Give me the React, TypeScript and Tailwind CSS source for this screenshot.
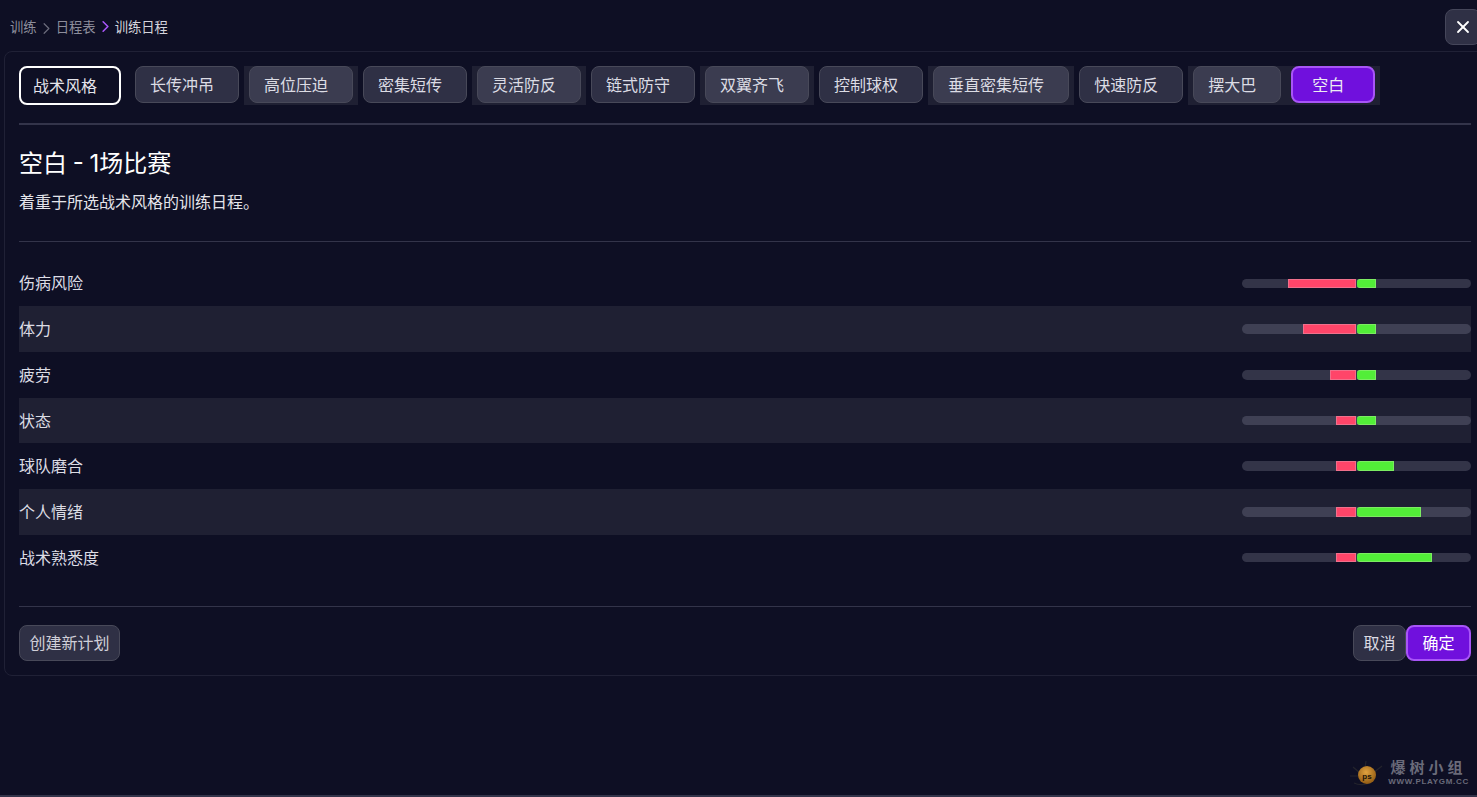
import React from 'react';
import { X, ChevronRight } from 'lucide-react';

const styles = [
  { label: '长传冲吊' },
  { label: '高位压迫', strip: true },
  { label: '密集短传' },
  { label: '灵活防反', strip: true },
  { label: '链式防守' },
  { label: '双翼齐飞', strip: true },
  { label: '控制球权' },
  { label: '垂直密集短传', strip: true },
  { label: '快速防反' },
  { label: '摆大巴', strip: true },
  { label: '空白', strip: true, active: true },
];

const stats = [
  { label: '伤病风险', down: 68, up: 19 },
  { label: '体力', down: 53, up: 19 },
  { label: '疲劳', down: 26, up: 19 },
  { label: '状态', down: 20, up: 19 },
  { label: '球队磨合', down: 20, up: 37 },
  { label: '个人情绪', down: 20, up: 64 },
  { label: '战术熟悉度', down: 20, up: 75 },
];

function StatBar({ down, up, shaded }: { down: number; up: number; shaded: boolean }) {
  return (
    <div className={`flex h-[9.5px] w-[229px] overflow-hidden rounded-full ${shaded ? 'bg-[#3f4054]' : 'bg-[#333448]'}`}>
      <div className="flex w-[114px] justify-end">
        <div className="border border-[#f0708c] bg-[#ff4569]" style={{ width: down }} />
      </div>
      <div className="w-[1px]" />
      <div className="rounded-l-[3px] border border-[#7cec62] border-l-0 bg-[#52ee38]" style={{ width: up }} />
    </div>
  );
}

export default function App() {
  return (
    <div className="relative h-[797px] w-[1477px] overflow-hidden border-b-2 border-[#33344a] bg-[#0e0f24] text-[#e4e4ea] [font-family:'Inter','Noto_Sans_CJK_SC',sans-serif]">
      {/* Breadcrumb */}
      <div className="flex h-[51px] items-start justify-between pl-[10px] pt-[9px]">
        <div className="flex h-[38px] items-center text-[13.33px] text-[#8d8e9c]">
          <span>训练</span>
          <ChevronRight className="h-[19px] w-[19px] text-[#6b6c7c]" strokeWidth={1.5} />
          <span>日程表</span>
          <ChevronRight className="-mt-[3px] h-[19px] w-[19px] text-[#a855f7]" strokeWidth={2} />
          <span className="text-[#d5d5dd]">训练日程</span>
        </div>
        <button className="-mr-[4px] flex h-[36px] w-[36px] items-center justify-center rounded-lg border border-[#45465a] bg-[#2f3045] text-white">
          <X className="h-[20px] w-[20px]" strokeWidth={2.2} />
        </button>
      </div>

      {/* Panel */}
      <div className="ml-[4px] -mr-[8px] h-[625px] rounded-lg border border-[#202136] pl-[14px] pr-[13px] pt-[14px]">
        <div className="flex h-[39px] items-start">
          <button className="mr-[9px] h-[39px] w-[102px] rounded-lg border-2 border-white pl-[12px] pr-[22px] text-center text-base">
            战术风格
          </button>
          {styles.map((s) => (
            <div key={s.label} className={`h-[39px] px-[5px] ${s.strip ? 'bg-[#1f2033]' : ''}`}>
              <button
                className={
                  s.active
                    ? 'h-[37px] min-w-[84px] rounded-lg border-2 border-[#a855f7] bg-[#7010dd] pl-[13px] pr-[23px] text-center text-base text-[#ececf2]'
                    : `h-[37px] min-w-[84px] rounded-lg border border-[#484959] pl-[14px] pr-[24px] text-center text-base text-[#dcdce4] ${s.strip ? 'bg-[#3b3c50]' : 'bg-[#2f3045]'}`
                }
              >
                {s.label}
              </button>
            </div>
          ))}
        </div>
        <div className="mt-[18px] h-[2px] w-[1452px] bg-[#33344a]" />

        <h1 className="mt-[23px] text-2xl font-normal leading-[32px] text-white [word-spacing:-1px]">空白 - 1场比赛</h1>
        <p className="mt-[10px] text-base leading-[24px] text-[#e4e4ea]">着重于所选战术风格的训练日程。</p>
        <div className="mt-[27px] h-[1px] w-[1452px] bg-[#33344a]" />

        {/* Effects */}
        <div className="mt-[18.6px] w-[1452px]">
          {stats.map((s, i) => (
            <div
              key={s.label}
              className={`flex h-[45.7px] items-center justify-between text-base text-[#dcdce4] ${i % 2 === 1 ? 'bg-[#1f2033]' : ''}`}
            >
              <span>{s.label}</span>
              <StatBar down={s.down} up={s.up} shaded={i % 2 === 1} />
            </div>
          ))}
        </div>

        <div className="mt-[25.4px] h-[1px] w-[1452px] bg-[#33344a]" />
        <div className="mt-[18px] flex w-[1452px] items-start justify-between">
          <button className="h-[36px] w-[101px] rounded-lg border border-[#484959] bg-[#2f3045] text-base text-[#cfcfd8]">
            创建新计划
          </button>
          <div className="flex">
            <button className="h-[36px] w-[53px] rounded-lg border border-[#484959] bg-[#2f3045] text-base text-[#dcdce4]">
              取消
            </button>
            <button className="h-[36px] w-[65px] rounded-lg border-2 border-[#a855f7] bg-[#7010dd] text-base text-white">
              确定
            </button>
          </div>
        </div>
      </div>

      {/* Watermark */}
      <div className="absolute bottom-[7px] right-[8px] flex items-end gap-[3px]">
        <svg width="38" height="32" viewBox="0 0 38 32" className="mb-[-2px]">
          <defs>
            <radialGradient id="ball" cx="0.45" cy="0.35" r="0.7">
              <stop offset="0" stopColor="#e2a33f" />
              <stop offset="1" stopColor="#8a5510" />
            </radialGradient>
          </defs>
          <path d="M6 9l7 6M3 18l8 0M19 3l-1 7M35 8l-9 7M7 25c6 3 14 2 20-3" stroke="#23232c" strokeWidth="1.2" fill="none" />
          <circle cx="20" cy="17" r="9" fill="url(#ball)" />
          <text x="20" y="21" textAnchor="middle" fontSize="8" fontWeight="700" fill="#1b1408" fontFamily="Liberation Sans, sans-serif">ps</text>
        </svg>
        <div className="mb-[2px] flex flex-col items-center text-[#6a6b7a]">
          <span className="text-[15px] font-bold leading-[16px] tracking-[4px] [font-family:'Noto_Sans_CJK_SC',sans-serif]">爆树小组</span>
          <span className="mt-[2px] text-[8px] font-bold leading-[9px] tracking-[0.7px] [font-family:'Liberation_Sans',sans-serif]">WWW.PLAYGM.CC</span>
        </div>
      </div>
    </div>
  );
}
